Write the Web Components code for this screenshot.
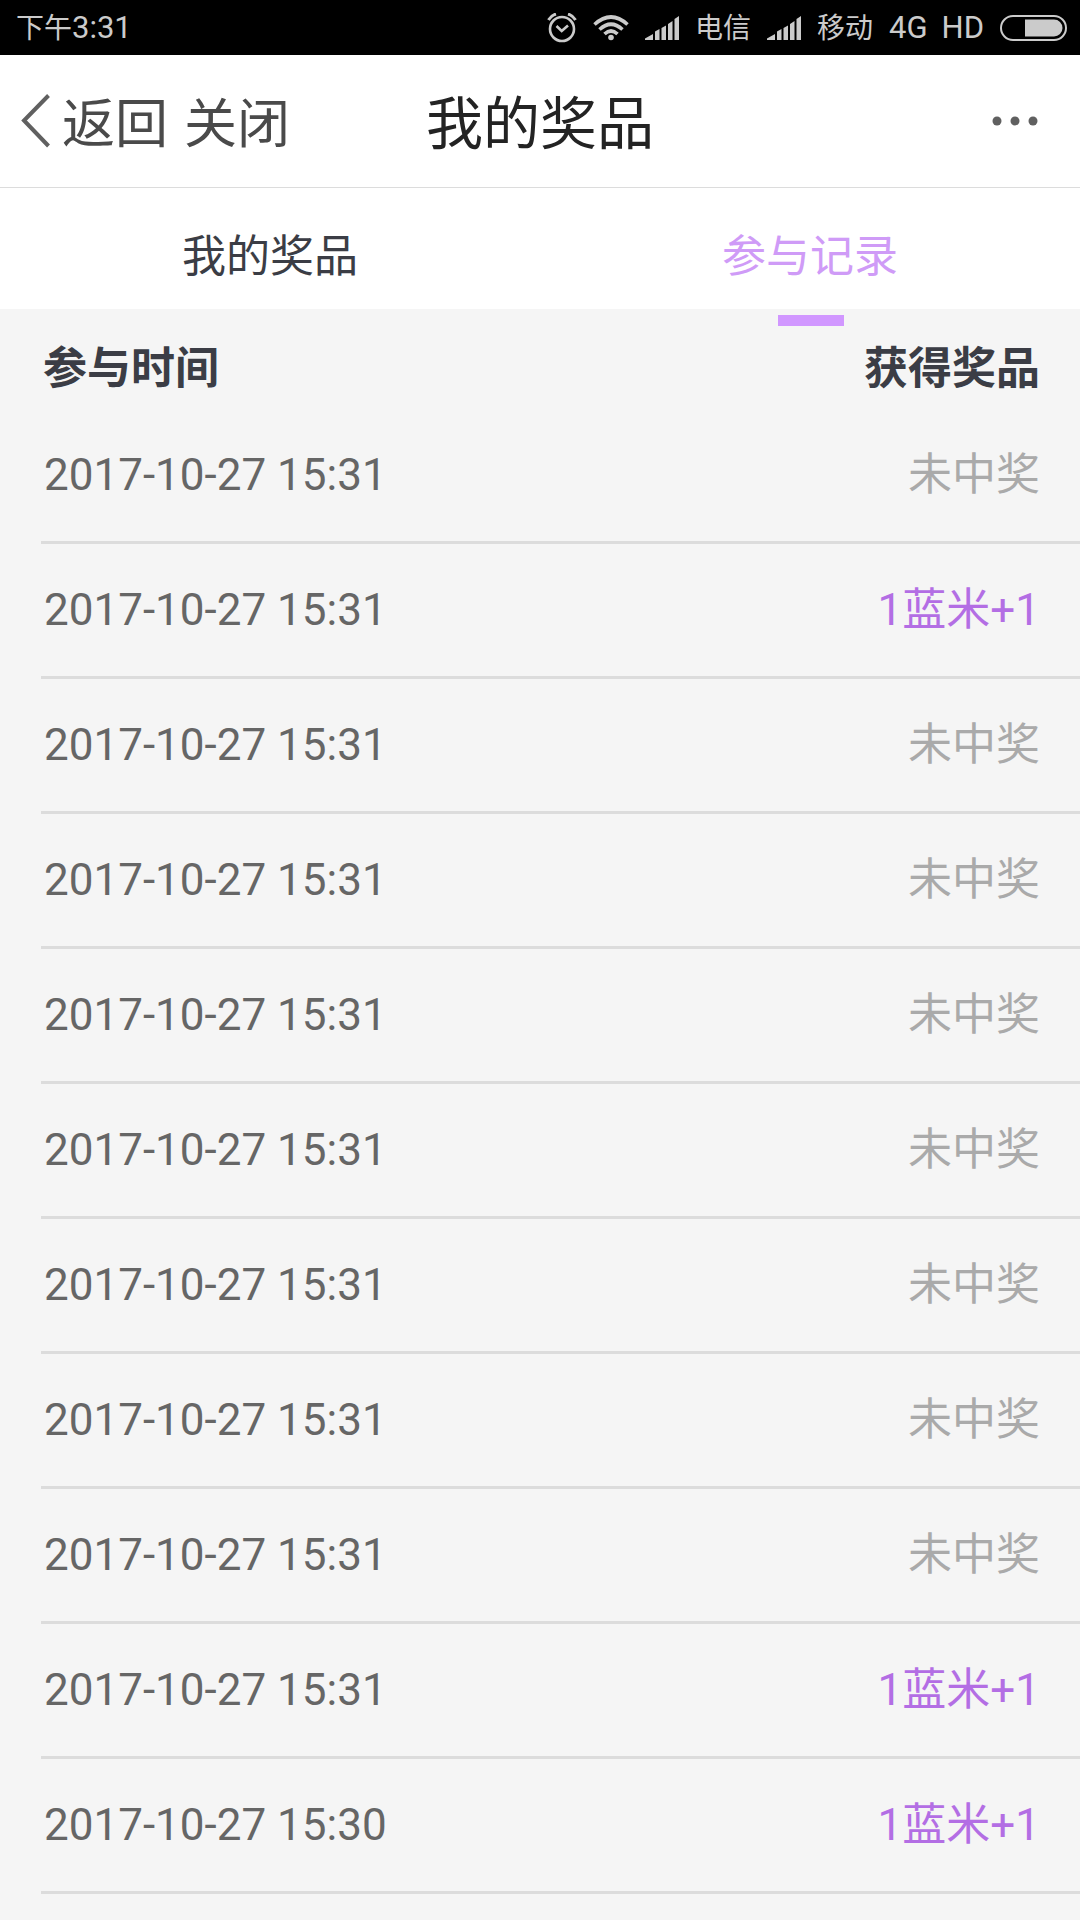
<!DOCTYPE html>
<html lang="zh-CN">
<head>
<meta charset="utf-8">
<meta name="viewport" content="width=device-width, initial-scale=1">
<title>我的奖品</title>
<style>
  body { margin: 0; min-height: 100vh; background: #f5f5f5; font-family: Roboto, "Noto Sans CJK SC", sans-serif; }
</style>
</head>
<body>
<prize-page></prize-page>

<script>
class BaseElement extends HTMLElement {
  constructor() {
    super();
    this.attachShadow({ mode: 'open' }).innerHTML = this.render();
  }
}

customElements.define('signal-bars', class extends BaseElement {
  render() {
    return `<style>:host{display:block;width:34px;height:24px}svg{display:block}</style>
    <svg width="34" height="24" viewBox="0 0 34 24" fill="currentColor" aria-hidden="true">
      <path d="M0 24V22.500L8 18V24ZM10 24V15.500L14.500 13V24ZM16.500 24V12L21 9.500V24ZM23 24V8L27.500 5V24ZM29.500 24V3L34 0V24Z"/>
    </svg>`;
  }
});

customElements.define('status-bar', class extends BaseElement {
  render() {
    return `<style>
      :host{display:flex;align-items:center;justify-content:space-between;height:55px;padding:0 13px 0 16px;background:#000;color:#cbcbcb;font-size:28px;line-height:40px}
      .icons,.phone{display:flex;align-items:center;gap:16px}
      .latin{font-size:31px}
      .network{display:flex;gap:14px}
      span{padding-top:2px}
      svg{display:block}
    </style>
    <span>下午<span class="latin">3:31</span></span>
    <div class="icons">
      <div class="phone">
      <svg width="30" height="30" viewBox="0 0 30 30" fill="none" stroke="currentColor" aria-hidden="true">
        <circle cx="15" cy="16" r="12" stroke-width="2.600"/>
        <path d="M9.500 13L14.700 18L21 12.500" stroke-width="2.600"/>
        <path d="M1.500 7Q4 2.500 9 1M28.500 7Q26 2.500 21 1" stroke-width="3"/>
      </svg>
      <svg width="36" height="26" viewBox="0 0 36 26" fill="none" stroke="currentColor" stroke-width="3.600" aria-hidden="true">
        <path d="M1.500 9.500Q18 -5.500 34.500 9.500M6.500 14.500Q18 4 29.500 14.500M11.500 19Q18 13 24.500 19"/>
        <circle cx="18" cy="22.500" r="2.800" fill="currentColor" stroke="none"/>
      </svg>
      <signal-bars></signal-bars>
      <span>电信</span>
      <signal-bars></signal-bars>
      <span>移动</span>
      </div>
      <div class="network latin"><div>4G</div><div>HD</div></div>
      <svg width="67" height="26" viewBox="0 0 67 26" aria-hidden="true">
        <rect x="1" y="1" width="65" height="24" rx="12" fill="none" stroke="currentColor" stroke-width="2"/>
        <path d="M25 4.500H54A8.500 8.500 0 0 1 54 21.500H25Z" fill="currentColor"/>
      </svg>
    </div>`;
  }
});

customElements.define('nav-bar', class extends BaseElement {
  render() {
    return `<style>
      :host{display:grid;grid-template-columns:1fr auto 1fr;align-items:center;height:132px;padding:0 20px;border-bottom:1px solid #dcdcdc;background:#fff}
      .left{display:flex;align-items:center;gap:16px}
      button{display:flex;align-items:center;gap:12px;padding:0;border:0;background:none;color:#4a4a4a;font:inherit;font-size:53px;line-height:72px}
      span,h1{padding-top:8px}
      svg{display:block}
      h1{margin:0;font-size:57px;line-height:72px;font-weight:400;color:#232323}
      .more{justify-self:end;padding-right:22px}
    </style>
    <div class="left">
      <button type="button"><svg width="30" height="54" viewBox="0 0 30 54" fill="none" stroke="#606060" stroke-width="4" aria-hidden="true"><path d="M28.500 1.500L4 26.500L28.500 52"/></svg><span>返回</span></button>
      <button type="button"><span>关闭</span></button>
    </div>
    <h1><slot></slot></h1>
    <button class="more" type="button" aria-label="更多"><svg width="46" height="10" viewBox="0 0 46 10" fill="#606060" aria-hidden="true"><circle cx="5" cy="5" r="4.500"/><circle cx="23" cy="5" r="4.500"/><circle cx="41" cy="5" r="4.500"/></svg></button>`;
  }
});

customElements.define('tab-item', class extends BaseElement {
  static observedAttributes = ['selected'];
  render() {
    return `<style>
      :host{display:flex;flex:1;position:relative}
      button{flex:1;height:121px;padding:16px 0 0;border:0;background:none;color:#3b3d45;font:inherit;font-size:44px;line-height:60px}
      :host([selected]) button{color:#cf9bf7}
      :host([selected])::after{content:"";position:absolute;left:50%;bottom:-17px;width:66px;height:11px;margin-left:-32px;background:#d197ff}
    </style>
    <button type="button" role="tab"><slot></slot></button>`;
  }
  attributeChangedCallback() {
    this.shadowRoot.querySelector('button').setAttribute('aria-selected', this.hasAttribute('selected'));
  }
});

customElements.define('tab-bar', class extends BaseElement {
  render() {
    return `<style>:host{display:flex;background:#fff}</style><slot></slot>`;
  }
  connectedCallback() {
    this.setAttribute('role', 'tablist');
  }
});

customElements.define('record-table', class extends BaseElement {
  render() {
    const day = '2017-10-27 ';
    const none = '未中奖';
    const win = '1蓝米+1';
    const records = [
      ['15:31', none], ['15:31', win], ['15:31', none], ['15:31', none],
      ['15:31', none], ['15:31', none], ['15:31', none], ['15:31', none],
      ['15:31', none], ['15:31', win], ['15:30', win]
    ];
    return `<style>
      :host{display:block;padding-left:41px;font-size:44px;line-height:60px}
      table{width:100%;border-collapse:separate;border-spacing:0}
      th,td{box-sizing:border-box;padding:0 0 0 3px;text-align:left;vertical-align:middle}
      th{height:100px;padding:19px 0 0 2px;color:#3b3d45;font-weight:700}
      td{height:135px;border-bottom:3px solid #dcdcdc;color:#666}
      th:last-child,td:last-child{padding-right:40px;text-align:right}
      td.none{color:#aaa}
      td.win{color:#b36ee4}
    </style>
    <table>
      <thead><tr><th scope="col">参与时间</th><th scope="col">获得奖品</th></tr></thead>
      <tbody>${records.map(([time, prize]) => `<tr><td>${day}${time}</td><td class="${prize === win ? 'win' : 'none'}">${prize}</td></tr>`).join('')}</tbody>
    </table>`;
  }
});

customElements.define('prize-page', class extends BaseElement {
  render() {
    return `<style>:host{display:block}</style>
    <status-bar></status-bar>
    <header><nav-bar>我的奖品</nav-bar></header>
    <tab-bar><tab-item>我的奖品</tab-item><tab-item selected>参与记录</tab-item></tab-bar>
    <main><record-table></record-table></main>`;
  }
});
</script>
</body>
</html>
